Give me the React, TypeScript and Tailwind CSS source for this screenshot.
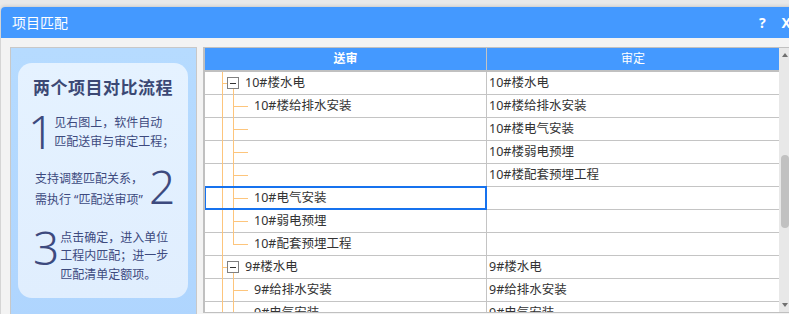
const CJK = "font-['Noto_Sans','Noto_Sans_CJK_SC',sans-serif]";

type Row = {
  kind: "root" | "child";
  left: string;
  right: string;
  selected?: boolean;
  last?: boolean;
};

const rows: Row[] = [
  { kind: "root", left: "10#楼水电", right: "10#楼水电" },
  { kind: "child", left: "10#楼给排水安装", right: "10#楼给排水安装" },
  { kind: "child", left: "", right: "10#楼电气安装" },
  { kind: "child", left: "", right: "10#楼弱电预埋" },
  { kind: "child", left: "", right: "10#楼配套预埋工程" },
  { kind: "child", left: "10#电气安装", right: "", selected: true },
  { kind: "child", left: "10#弱电预埋", right: "" },
  { kind: "child", left: "10#配套预埋工程", right: "", last: true },
  { kind: "root", left: "9#楼水电", right: "9#楼水电" },
  { kind: "child", left: "9#给排水安装", right: "9#给排水安装" },
  { kind: "child", left: "9#电气安装", right: "9#电气安装" },
];

function TreeCell({ row }: { row: Row }) {
  return (
    <div className="relative flex h-full w-[282px] items-center border-r border-[#c4c4c4]">
      {/* root level guide */}
      <span className="absolute left-[17px] top-0 bottom-[-1px] w-px bg-[#fdc57c]" />
      {row.kind === "root" ? (
        <>
          <span className="absolute left-[17px] top-[11px] h-px w-[5px] bg-[#fdc57c]" />
          <span className="absolute left-[28px] top-[16px] bottom-[-1px] w-px bg-[#fdc57c]" />
          <span className="absolute left-[22px] top-[5px] flex h-[12px] w-[12px] items-center justify-center border border-[#808080] bg-white">
            <span className="h-px w-[6px] bg-[#333]" />
          </span>
          <span className="pl-[40px] text-[12.5px] text-[#333]">{row.left}</span>
        </>
      ) : (
        <>
          <span
            className={
              row.last
                ? "absolute left-[28px] top-0 h-[12px] w-px bg-[#fdc57c]"
                : "absolute left-[28px] top-0 bottom-[-1px] w-px bg-[#fdc57c]"
            }
          />
          <span className="absolute left-[28px] top-[11px] h-px w-[15px] bg-[#fdc57c]" />
          <span className="pl-[49px] text-[12.5px] text-[#333]">{row.left}</span>
        </>
      )}
      {row.selected && (
        <span className="absolute left-[-1px] right-[-1px] top-[-1px] bottom-[-1px] border-2 border-[#1672ee]" />
      )}
    </div>
  );
}

function Step1() {
  return (
    <div className="mt-[8px] flex items-start pl-[10px]">
      <span className="h-[46px] font-['Noto_Sans',sans-serif] text-[46px] font-light leading-none">1</span>
      <p className="ml-0 mt-[6px] text-[12px] leading-[18.5px]">
        见右图上，软件自动
        <br />
        匹配送审与审定工程；
      </p>
    </div>
  );
}

function Step2() {
  return (
    <div className="mt-[9px] flex items-start pl-[17px]">
      <p className="mt-[4.5px] text-[12px] leading-[21px]">
        支持调整匹配关系，
        <br />
        需执行 “匹配送审项”
      </p>
      <span className="ml-[6px] h-[46px] font-['Noto_Sans',sans-serif] text-[46px] font-light leading-none">2</span>
    </div>
  );
}

function Step3() {
  return (
    <div className="mt-[14px] flex items-start pl-[15px]">
      <span className="h-[46px] font-['Noto_Sans',sans-serif] text-[46px] font-light leading-none">3</span>
      <p className="ml-[1px] mt-[5px] text-[12px] leading-[18.5px]">
        点击确定，进入单位
        <br />
        工程内匹配；进一步
        <br />
        匹配清单定额项。
      </p>
    </div>
  );
}

export default function App() {
  return (
    <div className={`h-[314px] w-[789px] overflow-hidden bg-[#e9e9e9] pl-px pt-[7px] ${CJK}`}>
      <div className="w-[800px] overflow-hidden rounded-t-[4px] bg-[#f3f3f3] shadow-[0_0_4px_rgba(0,0,0,0.2)]">
        {/* title bar */}
        <div className="flex h-[31px] items-center bg-[#4499ff] text-white">
          <span className="pl-[11px] text-[14px]">项目匹配</span>
          <span className="ml-auto text-[14px] font-bold">?</span>
          <span className="ml-[16px] mr-[10px] text-[14px] font-bold">X</span>
        </div>

        <div className="flex pl-[9px] pt-[9px]">
          {/* left guide panel */}
          <div className="h-[280px] w-[187px] border border-[#c8c8c8] bg-gradient-to-b from-[#b6dbff] to-[#afd5fe] pl-[7px] pt-[15px]">
            <div className="h-[235px] w-[170px] rounded-[14px] bg-gradient-to-b from-[#e5f2ff] to-[#e0eefe] pt-[13px] text-[#3d4a7e]">
              <h2 className="text-center text-[17px] font-bold leading-[24px] tracking-[0.5px] text-[#3b4874]">
                两个项目对比流程
              </h2>
              <Step1 />
              <Step2 />
              <Step3 />
            </div>
          </div>

          {/* matching table */}
          <div className="ml-[6px] flex h-[266px] flex-1 overflow-hidden border-t border-b border-l-2 border-[#c0c0c0] bg-white">
            <div className="flex w-[574px] flex-col">
              <div className="flex h-[24px] shrink-0 border-b-2 border-[#c0c0c0] bg-[#4499ff] text-[12px] text-white">
                <div className="flex w-[282px] items-center justify-center border-r border-[#c4c4c4] font-bold">送审</div>
                <div className="flex flex-1 items-center justify-center">审定</div>
              </div>
              {rows.map((row, i) => (
                <div key={i} className="flex h-[23px] shrink-0 border-b border-[#c4c4c4]">
                  <TreeCell row={row} />
                  <div className="flex flex-1 items-center pl-[2px] text-[12.5px] text-[#333]">{row.right}</div>
                </div>
              ))}
            </div>
            {/* scrollbar */}
            <div className="flex w-[12px] flex-col items-center bg-[#e8e8e8]">
              <span className="mt-[5px] h-0 w-0 border-x-[3.5px] border-b-[4px] border-x-transparent border-b-[#707070]" />
              <span className="mt-[98px] h-[73px] w-[8px] rounded-[4px] bg-[#c1c1c1]" />
              <span className="mt-auto mb-[5px] h-0 w-0 border-x-[3.5px] border-t-[4px] border-x-transparent border-t-[#707070]" />
            </div>
          </div>
        </div>
      </div>
    </div>
  );
}
